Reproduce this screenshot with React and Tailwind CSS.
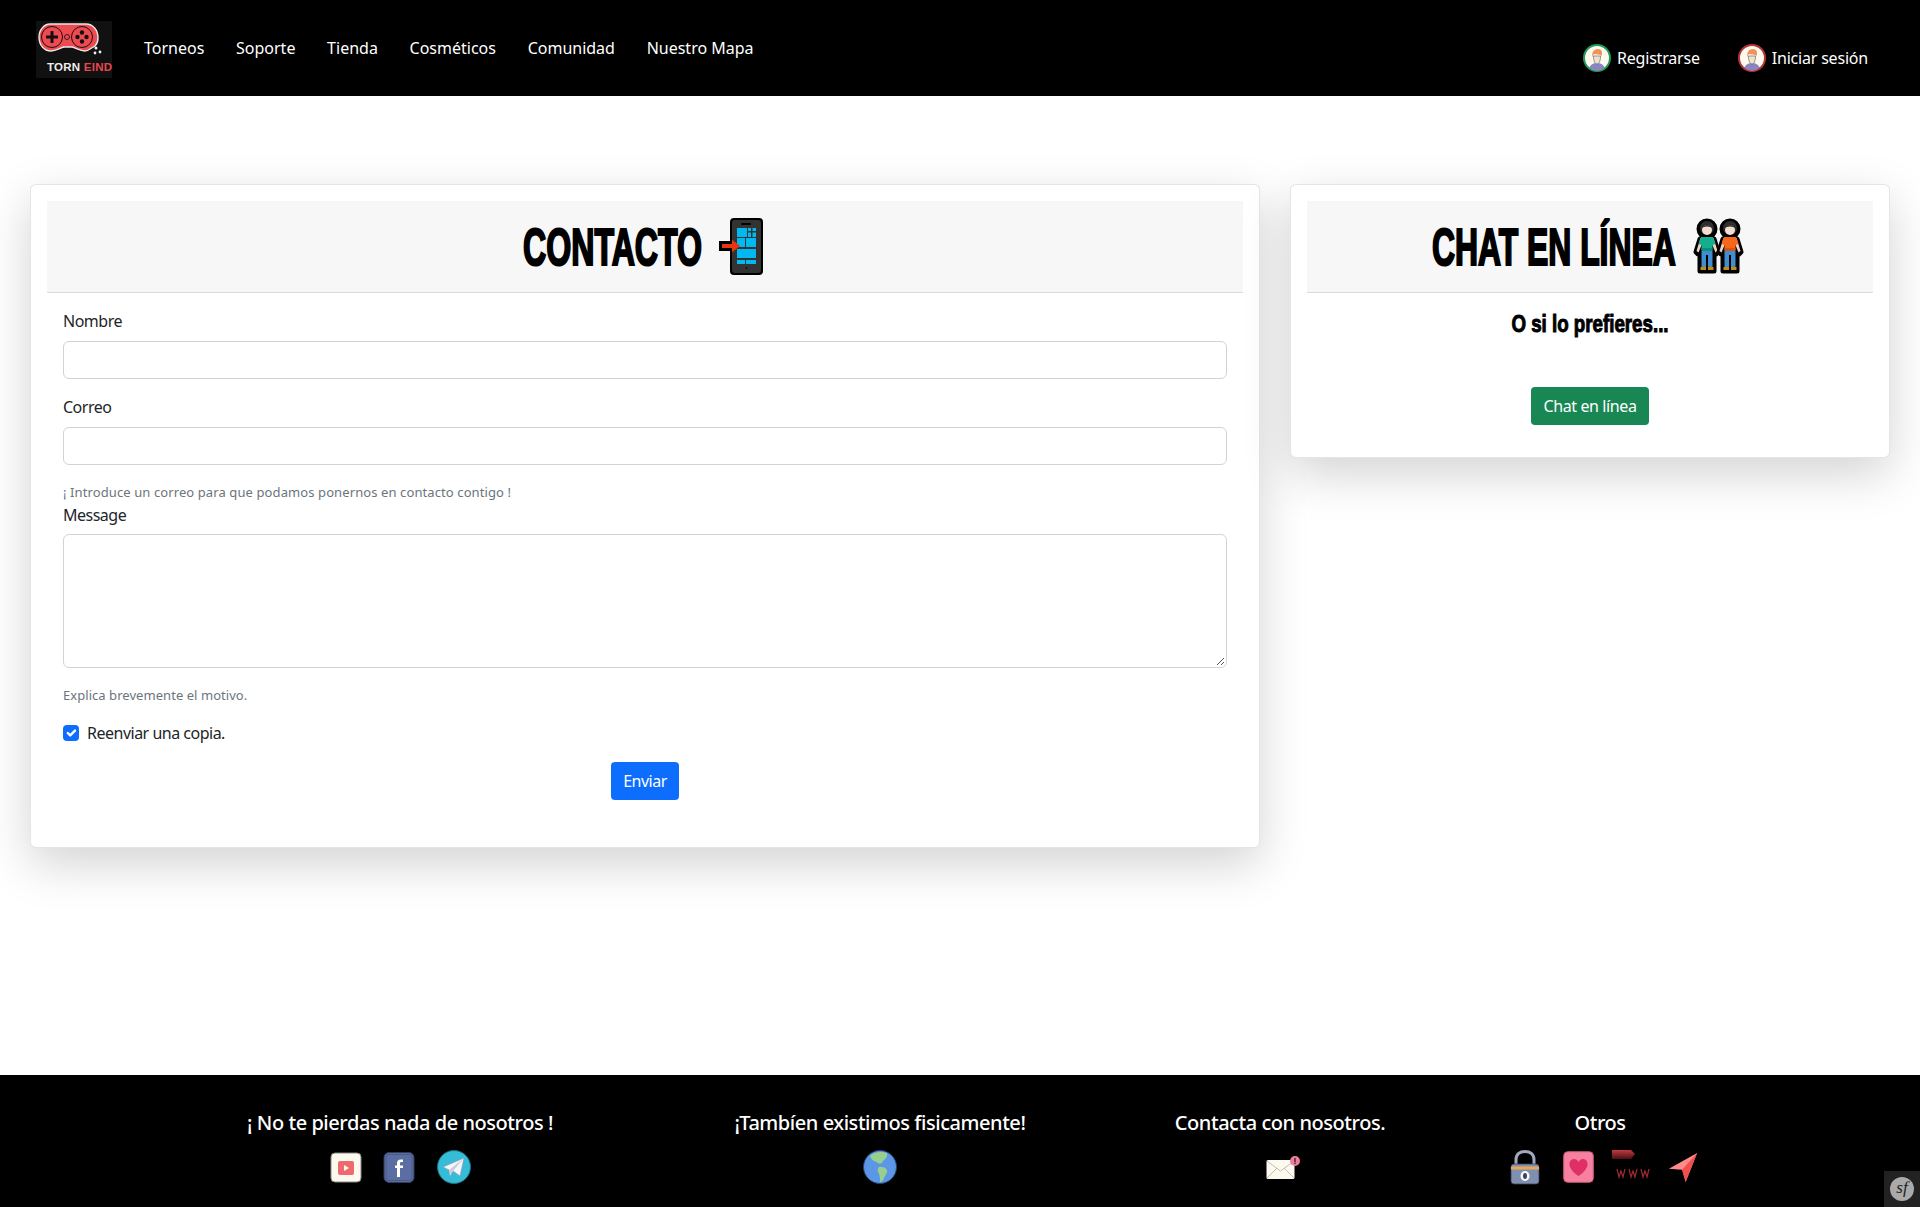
import React from "react";

const sans = "font-['Noto_Sans','Open_Sans',sans-serif]";

function Logo() {
  return (
    <div className="relative w-[76px] h-[57px] bg-[#111111] shrink-0">
      <svg viewBox="0 0 76 57" className="absolute inset-0 w-full h-full">
        <path d="M14 3 H50 C57 3 62 9 62 17 C62 20 61 23 59 25 L54 28 C52 29.5 50.500 30 49 30 C44 30 40 27 36 26 H28 C24 27 20 30 15 30 C8 30 3 24 3 16 C3 9 8 3 14 3 Z" fill="#ef4a50" stroke="#e8e8e8" strokeWidth="1.4" />
        <circle cx="16" cy="16" r="10.5" fill="none" stroke="#111" strokeWidth="1" />
        <circle cx="46" cy="16" r="10.5" fill="none" stroke="#111" strokeWidth="1" />
        <path d="M16 10 V22 M10 16 H22" stroke="#111" strokeWidth="3" />
        <circle cx="46" cy="11.5" r="2.2" fill="#111" />
        <circle cx="46" cy="20.5" r="2.2" fill="#111" />
        <circle cx="41.5" cy="16" r="2.2" fill="#111" />
        <circle cx="50.5" cy="16" r="2.2" fill="#111" />
        <circle cx="31" cy="16" r="2.5" fill="none" stroke="#111" strokeWidth="0.8" />
        <circle cx="60" cy="27" r="1.5" fill="#eee" />
        <circle cx="64" cy="31" r="1.4" fill="#eee" />
        <circle cx="59" cy="32" r="1.4" fill="#eee" />
      </svg>
      <span className="absolute left-[11px] top-[39px] whitespace-nowrap font-['Liberation_Sans',sans-serif] text-[11.5px] tracking-[0.25px] leading-[14px] font-bold text-[#eeeeee]">
        TORN <span className="text-[#e5484d]">EIND</span>
      </span>
    </div>
  );
}

function Avatar({ ring }) {
  return (
    <svg viewBox="0 0 28 28" className="w-[28px] h-[28px] shrink-0">
      <circle cx="14" cy="14" r="13" fill="#fdf9ee" stroke={ring} strokeWidth="2" />
      <path d="M6.5 23.5 C8 20 11 19 14 19 C17 19 20 20 21.5 23.5 C19 26 16 26.8 14 26.8 C12 26.8 9 26 6.5 23.5 Z" fill="#8c86c0" />
      <path d="M10.5 12 C10.5 17 12 20 14 20 C16 20 17.5 17 17.5 12 Z" fill="#efe3d0" stroke="#555" strokeWidth="0.6" />
      <path d="M9.5 13 C8.5 8 11 5 15 5 C18.5 5 20 8 18.5 12 C17 10 14 10.5 11 10 C10.5 11 10 12 9.5 13 Z" fill="#f0935a" />
    </svg>
  );
}

function Phone() {
  return (
    <svg viewBox="0 0 44 57" className="w-[44px] h-[57px] shrink-0">
      <rect x="11" y="0" width="33" height="57" rx="4" fill="#000" />
      <rect x="13" y="2" width="29" height="53" rx="3" fill="#333" />
      <rect x="22" y="5" width="10" height="2" rx="1" fill="#000" />
      <rect x="18" y="10" width="10" height="9" fill="#00b9f1" />
      <rect x="29" y="10" width="3" height="3" fill="#00b9f1" />
      <rect x="33.5" y="10" width="3.5" height="3" fill="#00b9f1" />
      <rect x="29" y="14.5" width="3" height="4.5" fill="#00b9f1" />
      <rect x="33.5" y="14.5" width="3.5" height="4.5" fill="#00b9f1" />
      <rect x="18" y="20" width="8" height="9" fill="#00b9f1" />
      <rect x="27" y="20" width="10" height="9" fill="#00b9f1" />
      <rect x="18" y="31" width="19" height="9" fill="#00b9f1" />
      <rect x="18" y="42" width="8" height="4" fill="#00b9f1" />
      <rect x="27" y="42" width="10" height="4" fill="#00b9f1" />
      <circle cx="27.5" cy="50" r="1" fill="#111" />
      <rect x="0" y="23" width="14" height="10" fill="#000" />
      <path d="M3 26 H13 V21.5 L21 28 L13 34.5 V30 H3 Z" fill="#e8340f" />
    </svg>
  );
}

function Person({ x, shirt, shirtDark }) {
  return (
    <g transform={`translate(${x} 0)`}>
      <g stroke="#000" strokeWidth="5" strokeLinejoin="round" strokeLinecap="round">
        <circle cx="12" cy="11" r="8" fill="#000" />
        <path d="M5 21 H19 L23 34 L21 36 L19 33 V53 H5 V33 L3 36 L1 34 Z" fill="#000" />
      </g>
      <circle cx="12" cy="10" r="7" fill="#2e2e2e" />
      <ellipse cx="12" cy="12" rx="5" ry="5" fill="#f5ddd0" />
      <path d="M6 10 C7 6 17 6 18 10 C14 8 10 8 6 10 Z" fill="#2e2e2e" />
      <path d="M5.5 20 H18.5 L22.5 33 L20.5 34.5 L17 26 H7 L3.5 34.5 L1.5 33 Z" fill="#f1d3c5" />
      <path d="M6 19 H18 L20.5 26 L17.5 27 V32 H6.5 V27 L3.5 26 Z" fill={shirt} />
      <rect x="6.5" y="30" width="11" height="3" fill={shirtDark} />
      <path d="M6.5 33 H17.5 V49 H13 V37 H11 V49 H6.5 Z" fill="#3f8fd0" />
      <rect x="5.5" y="49" width="5.5" height="3" fill="#c98a0e" />
      <rect x="13" y="49" width="5.5" height="3" fill="#c98a0e" />
    </g>
  );
}

function People() {
  return (
    <svg viewBox="0 0 51 57" className="w-[51px] h-[57px] shrink-0">
      <Person x="2" shirt="#13ae8d" shirtDark="#0d8f74" />
      <Person x="25" shirt="#f7661b" shirtDark="#d9540f" />
    </svg>
  );
}

function Field({ label, children }) {
  return (
    <div>
      <label className="block h-[24px] leading-[24px] mb-[8px] text-[16px] tracking-[-0.5px] text-[#212529]">{label}</label>
      {children}
    </div>
  );
}

const inputCls = "block w-full h-[38px] bg-white border border-[#ced4da] rounded-[6px]";

function YouTube() {
  return (
    <svg viewBox="0 0 32 31" className="w-[32px] h-[31px]">
      <rect x="1" y="1" width="30" height="29" rx="4" fill="#fdf9ee" stroke="#888" strokeWidth="1" />
      <rect x="8" y="9" width="16" height="14" rx="2" fill="#ee6a6f" />
      <path d="M14 13 L19 16 L14 19 Z" fill="#fdf9ee" />
    </svg>
  );
}
function Facebook() {
  return (
    <svg viewBox="0 0 32 31" className="w-[32px] h-[31px]">
      <rect x="1" y="0.5" width="30" height="30" rx="5" fill="#5a6ea3" stroke="#2f3a5c" strokeWidth="1" />
      <rect x="3" y="2.5" width="26" height="26" rx="3" fill="none" stroke="#46557f" strokeWidth="0.8" />
      <path d="M17 25 V16 H20 V13.5 H17 V11.5 C17 10.3 17.6 10 18.8 10 H20 V7.5 H17.8 C15.2 7.5 14 9 14 11.3 V13.5 H12 V16 H14 V25 Z" fill="#fff" />
    </svg>
  );
}
function Telegram() {
  return (
    <svg viewBox="0 0 34 34" className="w-[34px] h-[34px]">
      <circle cx="17" cy="17" r="16.5" fill="#35bcd6" stroke="#1f6f80" strokeWidth="1" />
      <path d="M6 17 L27 8 L23 26 L16 21 L13 26 L12 20 Z" fill="#f5f6fb" stroke="#8c93ad" strokeWidth="0.6" />
      <path d="M12 20 L27 8 L16 21 L13 26 Z" fill="#c9cde0" />
    </svg>
  );
}
function Globe() {
  return (
    <svg viewBox="0 0 34 34" className="w-[34px] h-[34px]">
      <circle cx="17" cy="17" r="16.5" fill="#5b97e6" stroke="#24456f" strokeWidth="1" />
      <path d="M7 6 C11 1.5 19 1 24 3 C25 7 22 9 20 11 C19 14 16 14 15 13 C12 11 9 11 7 6 Z" fill="#98cf8f" />
      <path d="M16 17 C19 16 23 18 24 20 C25 23 22 25 21 28 C20 31 18 32.5 17 32 C17 28 17 25 15 22 C14 20 15 18 16 17 Z" fill="#98cf8f" />
    </svg>
  );
}
function Mail() {
  return (
    <svg viewBox="0 0 34 23" className="w-[34px] h-[23px]">
      <rect x="0.5" y="4" width="28" height="19" rx="1.5" fill="#fdf9ee" />
      <path d="M1 5 L14.5 15 L28 5 M1 22 L11 12 M28 22 L18 12" fill="none" stroke="#b5b09e" strokeWidth="0.8" />
      <circle cx="29" cy="5" r="5" fill="#ee7f9c" />
      <rect x="28.3" y="2" width="1.4" height="4" fill="#40222c" />
      <rect x="28.3" y="6.6" width="1.4" height="1.4" fill="#40222c" />
    </svg>
  );
}
function Lock() {
  return (
    <svg viewBox="0 0 30 35" className="w-[30px] h-[35px]">
      <path d="M6 15 V10 C6 4 10 1.5 15 1.5 C20 1.5 24 4 24 10 V15" fill="none" stroke="#a2a8bd" strokeWidth="3" />
      <rect x="1" y="14" width="28" height="20" rx="3" fill="#7f8fb0" stroke="#3a3f55" strokeWidth="0.8" />
      <rect x="1" y="16.5" width="28" height="3" fill="#e8a85c" />
      <ellipse cx="15" cy="26" rx="4.5" ry="5" fill="#fdf9ee" />
      <ellipse cx="15" cy="26" rx="2" ry="3" fill="#3a3f75" />
    </svg>
  );
}
function Heart() {
  return (
    <svg viewBox="0 0 31 32" className="w-[31px] h-[32px]">
      <rect x="0.7" y="0.7" width="29.6" height="30.6" rx="4" fill="#f5809f" stroke="#c9587a" strokeWidth="1" />
      <path d="M15.5 25 C8 20 6.5 16 6.5 13 C6.5 9.5 9 8 11 8 C13 8 14.5 9 15.5 11 C16.5 9 18 8 20 8 C22 8 24.5 9.5 24.5 13 C24.5 16 23 20 15.5 25 Z" fill="#df2f66" />
    </svg>
  );
}
function Www() {
  return (
    <svg viewBox="0 0 38 35" className="w-[38px] h-[35px]">
      <defs>
        <linearGradient id="wg" x1="0" x2="0" y1="0" y2="1">
          <stop offset="0" stopColor="#c23a40" />
          <stop offset="1" stopColor="#4a1114" />
        </linearGradient>
      </defs>
      <path d="M0 0 H19 L23 4 L19 9 H0 Z" fill="url(#wg)" />
      <path d="M5 19 L7 27 L9 21 L11 27 L13 19 M17 19 L19 27 L21 21 L23 27 L25 19 M29 19 L31 27 L33 21 L35 27 L37 19" fill="none" stroke="#9c2a2f" strokeWidth="1.2" />
    </svg>
  );
}
function Send() {
  return (
    <svg viewBox="0 0 34 35" className="w-[30px] h-[35px]">
      <path d="M33 1 L1 19 L16 20 L20 34 Z" fill="#ff8a8a" />
      <path d="M33 1 L16 20 L20 34 Z" fill="#f24e4e" />
    </svg>
  );
}

function FooterCol({ title, children, shift = "" }) {
  return (
    <div className="flex flex-col items-center">
      <h5 className="h-[30px] leading-[30px] text-[20px] font-medium tracking-[-0.45px] text-white whitespace-nowrap">{title}</h5>
      <div className={`mt-[11px] h-[36px] flex items-center ${shift}`}>{children}</div>
    </div>
  );
}

export default function App() {
  return (
    <div className={`min-h-[1207px] flex flex-col bg-white ${sans}`}>
      <nav className="h-[96px] bg-black flex items-start text-white text-[16px]">
        <div className="ml-[36px] mt-[21px]"><Logo /></div>
        <ul className="ml-[32px] mt-[36px] flex gap-[31.7px] leading-[24px]">
          <li>Torneos</li>
          <li>Soporte</li>
          <li>Tienda</li>
          <li>Cosméticos</li>
          <li>Comunidad</li>
          <li>Nuestro Mapa</li>
        </ul>
        <div className="ml-auto mr-[52px] mt-[44px] flex gap-[38px] leading-[24px] tracking-[-0.2px]">
          <div className="flex items-center gap-[6px]"><Avatar ring="#1f9a5c" /><span>Registrarse</span></div>
          <div className="flex items-center gap-[6px]"><Avatar ring="#b5343a" /><span>Iniciar sesión</span></div>
        </div>
      </nav>

      <main className="flex-1 flex items-start gap-[30px] px-[30px] pt-[88px]">
        <section className="w-[1230px] h-[664px] bg-white border border-black/10 rounded-[6px] shadow-[0_16px_48px_rgba(0,0,0,0.175)] p-[16px]">
          <header className="h-[92px] bg-[#f7f7f7] border-b border-[#d9d9d9] flex items-center justify-center gap-[16px] pr-[4px]">
            <h2 className="w-[180px] pt-[3px] font-['Liberation_Sans',sans-serif] font-bold text-[51px] text-black whitespace-nowrap origin-left scale-x-[0.63] [-webkit-text-stroke:2.2px_#000]">CONTACTO</h2>
            <Phone />
          </header>
          <div className="px-[16px] pt-[16px] flex flex-col">
            <Field label="Nombre"><div className={inputCls} /></Field>
            <div className="mt-[16px]"><Field label="Correo"><div className={inputCls} /></Field></div>
            <p className="mt-[17px] h-[20px] leading-[20px] text-[13px] tracking-[0.1px] text-[#6c757d]">¡ Introduce un correo para que podamos ponernos en contacto contigo !</p>
            <div className="mt-[1px]">
              <label className="block h-[24px] leading-[24px] mb-[7px] text-[16px] tracking-[-0.5px] text-[#212529]">Message</label>
              <div className="relative h-[134px] bg-white border border-[#ced4da] rounded-[6px]">
                <svg viewBox="0 0 10 10" className="absolute right-[1px] bottom-[1px] w-[10px] h-[10px]">
                  <path d="M9 2 L2 9 M9 6 L6 9" stroke="#555" strokeWidth="1" />
                </svg>
              </div>
            </div>
            <p className="mt-[17px] h-[20px] leading-[20px] text-[13px] tracking-[0.05px] text-[#6c757d]">Explica brevemente el motivo.</p>
            <div className="mt-[16px] h-[24px] flex items-center gap-[8px]">
              <span className="w-[16px] h-[16px] rounded-[4px] bg-[#0d6efd] flex items-center justify-center">
                <svg viewBox="0 0 20 20" className="w-[16px] h-[16px]"><path d="M6 10 l3 3 l6-6" fill="none" stroke="#fff" strokeWidth="3" strokeLinecap="round" strokeLinejoin="round" /></svg>
              </span>
              <span className="text-[16px] tracking-[-0.5px] text-[#212529] leading-[24px]">Reenviar una copia.</span>
            </div>
            <div className="mt-[17px] flex justify-center">
              <button className="w-[68px] h-[38px] rounded-[4px] bg-[#0d6efd] text-white text-[16px] tracking-[-0.5px]">Enviar</button>
            </div>
          </div>
        </section>

        <section className="w-[600px] h-[274px] bg-white border border-black/10 rounded-[6px] shadow-[0_16px_48px_rgba(0,0,0,0.175)] p-[16px]">
          <header className="h-[92px] bg-[#f7f7f7] border-b border-[#d9d9d9] flex items-center justify-center gap-[16px] pr-[4px]">
            <h2 className="w-[245px] pt-[3px] font-['Liberation_Sans',sans-serif] font-bold text-[51px] text-black whitespace-nowrap origin-left scale-x-[0.625] [-webkit-text-stroke:2.2px_#000]">CHAT EN LÍNEA</h2>
            <People />
          </header>
          <p className="mt-[16px] h-[30px] leading-[30px] text-center font-['Liberation_Sans',sans-serif] font-bold text-[24px] text-black [-webkit-text-stroke:1px_#000] scale-x-[0.78]">O si lo prefieres...</p>
          <div className="mt-[48px] flex justify-center">
            <button className="w-[118px] h-[38px] rounded-[4px] bg-[#198754] text-white text-[16px] tracking-[-0.4px]">Chat en línea</button>
          </div>
        </section>
      </main>

      <footer className="relative h-[132px] bg-black pt-[33px]">
        <div className="w-[1600px] mx-auto grid grid-cols-[3fr_3fr_2fr_2fr]">
          <FooterCol title="¡ No te pierdas nada de nosotros !">
            <div className="flex items-center gap-[21.500px]"><YouTube /><Facebook /><Telegram /></div>
          </FooterCol>
          <FooterCol title="¡Tambíen existimos fisicamente!">
            <Globe />
          </FooterCol>
          <FooterCol title="Contacta con nosotros." shift="pl-[6px]">
            <Mail />
          </FooterCol>
          <FooterCol title="Otros" shift="pl-[8px]">
            <div className="flex items-center">
              <Lock />
              <span className="ml-[23px]"><Heart /></span>
              <span className="ml-[18px]"><Www /></span>
              <span className="ml-[18px]"><Send /></span>
            </div>
          </FooterCol>
        </div>
        <div className="absolute right-0 bottom-0 w-[36px] h-[36px] bg-[#222222] flex items-center justify-center">
          <span className="w-[24px] h-[24px] rounded-full bg-[#aaaaaa] text-[#222222] text-[17px] leading-[22px] italic text-center font-['Liberation_Serif',serif]">sf</span>
        </div>
      </footer>
    </div>
  );
}
